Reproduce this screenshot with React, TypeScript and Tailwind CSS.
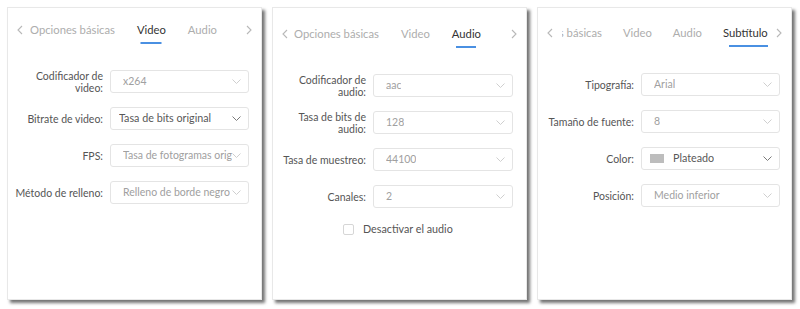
import React from "react";

const FONT = { fontFamily: "Lato, 'Noto Sans', sans-serif" };

function Chevron({ dark }: { dark?: boolean }) {
  return (
    <svg width="9" height="5" viewBox="0 0 9 5" className="shrink-0">
      <path d="M0.5 0.5 L4.5 4.5 L8.5 0.5" fill="none" stroke={dark ? "#7a7a7a" : "#cfcfcf"} strokeWidth="1" />
    </svg>
  );
}

function Arrow({ dir }: { dir: "l" | "r" }) {
  return (
    <svg width="6" height="10" viewBox="0 0 6 10" className="shrink-0">
      <path d={dir === "l" ? "M5 1 L1 5 L5 9" : "M1 1 L5 5 L1 9"} fill="none" stroke="#b8b8b8" strokeWidth="1.1" />
    </svg>
  );
}

type Row = { label: string[]; value: string; dark?: boolean; swatch?: boolean };

function Select({ row, w }: { row: Row; w: number }) {
  return (
    <div
      className={
        "flex h-[23px] items-center justify-between rounded-[3px] border border-[#e4e4e4] bg-white pr-[7px] " +
        (row.dark ? "pl-[8px]" : "pl-[12px]")
      }
      style={{ width: w }}
    >
      <div className="flex min-w-0 items-center gap-[9px] overflow-hidden">
        {row.swatch && <span className="h-[9px] w-[14px] shrink-0 bg-[#bdbdbd]" />}
        <span
          className={
            "whitespace-nowrap " + (row.dark ? "text-[10.75px] text-[#585858]" : "text-[10.5px] text-[#a0a0a0]")
          }
        >
          {row.value}
        </span>
      </div>
      <Chevron dark={row.dark} />
    </div>
  );
}

function Panel({
  tabs,
  active,
  rows,
  labelW,
  boxW,
  offset,
  stripMl,
  tabsTop,
  ulWidth,
  ulAlignRight,
  gap,
  checkbox,
}: {
  tabs: string[];
  active: number;
  rows: Row[];
  labelW: number;
  boxW: number;
  offset: number;
  stripMl: number;
  tabsTop: number;
  ulWidth: number;
  ulAlignRight?: boolean;
  gap: number;
  checkbox?: boolean;
}) {
  return (
    <div className="h-[293px] w-[255px] shrink-0 border border-[#e8e8e8] bg-white shadow-[3px_3px_3px_rgba(0,0,0,0.55)]">
      <div className="flex items-start pl-[9px] pr-[9px]" style={{ paddingTop: tabsTop }}>
        <div className="flex h-[16px] items-center">
          <Arrow dir="l" />
        </div>
        <div className="mr-[4px] h-[28px] flex-1 overflow-hidden" style={{ marginLeft: stripMl }}>
          <div className="flex items-start" style={{ marginLeft: -offset, gap }}>
            {tabs.map((t, i) => (
              <span
                key={t}
                className={
                  "relative whitespace-nowrap text-[11.25px] leading-[16px] " +
                  (i === active ? "text-[#333]" : "text-[#adadad]")
                }
              >
                {t}
                {i === active && (
                  <span
                    className={
                      "absolute top-[20px] h-[2px] bg-[#4a90e2] " +
                      (ulAlignRight ? "right-0" : "left-1/2 -translate-x-1/2")
                    }
                    style={{ width: ulWidth }}
                  />
                )}
              </span>
            ))}
          </div>
        </div>
        <div className="flex h-[16px] items-center">
          <Arrow dir="r" />
        </div>
      </div>
      <div className="flex flex-col gap-[14px] pt-[20px]">
        {rows.map((r) => (
          <div key={r.value} className="flex h-[23px] items-center">
            <div
              className="shrink-0 pr-[7px] text-right text-[10.5px] leading-[12px] text-[#555]"
              style={{ width: labelW + 7 }}
            >
              {r.label.map((l) => (
                <div key={l}>{l}</div>
              ))}
            </div>
            <Select row={r} w={boxW} />
          </div>
        ))}
        {checkbox && (
          <div className="flex h-[14px] items-center gap-[9px] pl-[70px]">
            <span className="h-[11px] w-[11px] rounded-[2px] border border-[#d6d6d6] bg-white" />
            <span className="text-[10.75px] text-[#555]">Desactivar el audio</span>
          </div>
        )}
      </div>
    </div>
  );
}

export default function App() {
  return (
    <div className="flex h-[309px] w-[800px] gap-[10px] bg-white pl-[7px] pt-[7px]" style={FONT}>
      <Panel
        tabs={["Opciones básicas", "Video", "Audio"]}
        active={1}
        labelW={95}
        boxW={139}
        offset={0}
        stripMl={7}
        gap={22}
        tabsTop={14}
        ulWidth={21}
        rows={[
          { label: ["Codificador de", "video:"], value: "x264" },
          { label: ["Bitrate de video:"], value: "Tasa de bits original", dark: true },
          { label: ["FPS:"], value: "Tasa de fotogramas original" },
          { label: ["Método de relleno:"], value: "Relleno de borde negro" },
        ]}
      />
      <Panel
        tabs={["Opciones básicas", "Video", "Audio"]}
        active={2}
        labelW={93}
        boxW={140}
        offset={0}
        stripMl={6}
        gap={22}
        tabsTop={18}
        ulWidth={20}
        checkbox
        rows={[
          { label: ["Codificador de", "audio:"], value: "aac" },
          { label: ["Tasa de bits de", "audio:"], value: "128" },
          { label: ["Tasa de muestreo:"], value: "44100" },
          { label: ["Canales:"], value: "2" },
        ]}
      />
      <Panel
        tabs={["Opciones básicas", "Video", "Audio", "Subtítulo"]}
        active={3}
        labelW={96}
        boxW={139}
        offset={45}
        stripMl={9}
        gap={21}
        tabsTop={17}
        ulWidth={39}
        ulAlignRight
        rows={[
          { label: ["Tipografía:"], value: "Arial" },
          { label: ["Tamaño de fuente:"], value: "8" },
          { label: ["Color:"], value: "Plateado", dark: true, swatch: true },
          { label: ["Posición:"], value: "Medio inferior" },
        ]}
      />
    </div>
  );
}
